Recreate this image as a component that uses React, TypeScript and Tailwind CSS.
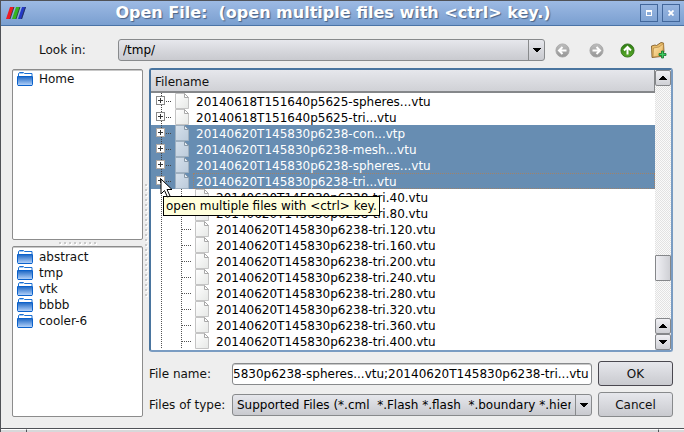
import React from "react";

const places = ["abstract", "tmp", "vtk", "bbbb", "cooler-6"];

type Entry = { name: string; selected?: boolean; child?: boolean; focused?: boolean };

const entries: Entry[] = [
  { name: "20140618T151640p5625-spheres...vtu" },
  { name: "20140618T151640p5625-tri...vtu" },
  { name: "20140620T145830p6238-con...vtp", selected: true },
  { name: "20140620T145830p6238-mesh...vtu", selected: true },
  { name: "20140620T145830p6238-spheres...vtu", selected: true },
  { name: "20140620T145830p6238-tri...vtu", selected: true, focused: true },
  ...[40, 80, 120, 160, 200, 240, 280, 320, 360, 400].map((n) => ({
    name: `20140620T145830p6238-tri.${n}.vtu`,
    child: true,
  })),
];

function Defs() {
  return (
    <svg width="0" height="0" className="absolute" aria-hidden="true">
      <defs>
        <linearGradient id="folder" x1="0" y1="0" x2="0" y2="1">
          <stop offset="0" stopColor="#1b66c4" />
          <stop offset="1" stopColor="#b9d6fb" />
        </linearGradient>
        <linearGradient id="paper" x1="0" y1="0" x2="1" y2="1">
          <stop offset="0" stopColor="#ffffff" />
          <stop offset="1" stopColor="#e6e8e6" />
        </linearGradient>
        <linearGradient id="paperSelected" x1="0" y1="0" x2="1" y2="1">
          <stop offset="0" stopColor="#d5e0eb" />
          <stop offset="1" stopColor="#bccbdb" />
        </linearGradient>
        <linearGradient id="gray" x1="0" y1="0" x2="0" y2="1">
          <stop offset="0" stopColor="#bdbdbd" />
          <stop offset="1" stopColor="#969696" />
        </linearGradient>
        <linearGradient id="green" x1="0" y1="0" x2="0" y2="1">
          <stop offset="0" stopColor="#2f7d12" />
          <stop offset="1" stopColor="#57a829" />
        </linearGradient>
        <linearGradient id="gold" x1="0" y1="0" x2="1" y2="1">
          <stop offset="0" stopColor="#fde7b0" />
          <stop offset="1" stopColor="#e8b258" />
        </linearGradient>
      </defs>
    </svg>
  );
}

function FolderIcon() {
  return (
    <svg width="16" height="14" viewBox="0 0 16 14" className="shrink-0" aria-hidden="true">
      <path d="M1.5 4V1.5L2.5.5h4l1 1h7.5V4" fill="#fff" stroke="#1a6fd2" />
      <path d="M2 1.5h4.500" stroke="#9cc7f5" />
      <path d="M.5 4.500h15v8l-.5 1H1l-.5-1z" fill="url(#folder)" stroke="#0b62cc" />
      <path d="M2 3.500h12" stroke="#fff" />
    </svg>
  );
}

function FileIcon({ selected }: { selected?: boolean }) {
  return (
    <svg width="14" height="16" viewBox="0 0 14 16" className="shrink-0" aria-hidden="true">
      <path
        d="M.5.5H9.500L13.500 4.500V15.500H.5z"
        fill={selected ? "url(#paperSelected)" : "url(#paper)"}
        stroke={selected ? "#9fb0c0" : "#c4c4c4"}
      />
      <path d="M9.500.5V4.500H13.500z" fill={selected ? "#e3eaf2" : "#fff"} stroke={selected ? "#8798a8" : "#a8a8a8"} />
    </svg>
  );
}

function Guides({ entry }: { entry: Entry }) {
  if (entry.child) {
    return (
      <svg width="44" height="16" viewBox="0 0 44 16" className="shrink-0" aria-hidden="true">
        <path d="M10.500 0V16M30.500 0V16M31 8.500H40" stroke="#555" strokeDasharray="1 1" fill="none" />
      </svg>
    );
  }
  return (
    <svg width="24" height="16" viewBox="0 0 24 16" className="shrink-0" aria-hidden="true">
      <path d="M10.500 0V3M10.500 12V16M15 8.500H20" stroke="#444" strokeDasharray="1 1" fill="none" />
      <rect x="5.500" y="3.500" width="8" height="8" fill="#fff" stroke={entry.selected ? "#b0a9a3" : "#888"} />
      <path d="M7 7.500H12M9.500 5V10" stroke="#333" />
    </svg>
  );
}

function Arrow({ up }: { up?: boolean }) {
  return (
    <svg width="8" height="4" viewBox="0 0 8 4" shapeRendering="crispEdges" aria-hidden="true">
      <path d={up ? "M0 4L3 0H5L8 4z" : "M0 0H8L5 4H3z"} fill="#000" />
    </svg>
  );
}

function Combo({ id, text, className }: { id: string; text: string; className?: string }) {
  return (
    <div className={`grid h-[22px] min-w-0 flex-1 grid-cols-[minmax(0,1fr)_17px] ${className ?? ""}`}>
      <select
        id={id}
        className="col-span-2 col-start-1 row-start-1 h-full w-full appearance-none overflow-hidden rounded-[3px] border border-[#888a8c] bg-linear-to-b from-[#e6e7ec] to-[#c9cacf] pr-5 pl-1 text-black outline-none"
      >
        <option>{text}</option>
      </select>
      <span className="pointer-events-none col-start-2 row-start-1 my-px flex items-center justify-center border-l border-[#888a8c]">
        <Arrow />
      </span>
    </div>
  );
}

function RoundArrow({ turn, color }: { turn: number; color: string }) {
  return (
    <svg width="15" height="15" viewBox="0 0 15 15" aria-hidden="true">
      <circle cx="7.500" cy="7.500" r="6.600" fill={`url(#${color})`} stroke={color === "green" ? "#2b6b16" : "#a5a5a5"} strokeWidth=".8" />
      <path
        d="M7.500 11.500V4.500M4 7.500L7.500 4L11 7.500"
        transform={`rotate(${turn} 7.5 7.5)`}
        fill="none"
        stroke="#fff"
        strokeWidth="2"
      />
    </svg>
  );
}

function NewFolderIcon() {
  return (
    <svg width="18" height="18" viewBox="0 0 18 18" aria-hidden="true">
      <path d="M1.500 5L5 4L6.500 4.500L11 1.500L13.500 2L14 11L11 15.500L2 16.500z" fill="#e9bd6b" stroke="#76501d" strokeWidth=".8" />
      <path d="M3.500 7L9 6L13.500 2.500L13 11L10.500 15L3 16z" fill="url(#gold)" stroke="#a87a35" strokeWidth=".6" />
      <path d="M11.500 10h2v2.500H16v2h-2.500V17h-2v-2.500H9v-2h2.500z" fill="#3fce61" stroke="#11702d" strokeWidth=".8" />
    </svg>
  );
}

const scrollButton =
  "flex h-4 w-full shrink-0 items-center justify-center rounded-[2px] border border-[#85878a] bg-linear-to-b from-[#f0f0f4] to-[#cfd0d5]";

const pushButton =
  "h-[25px] w-[75px] shrink-0 rounded-[3px] border bg-linear-to-b from-[#e6e7ec] to-[#c9cacf] text-center";

export default function App() {
  return (
    <div className="relative flex min-h-screen flex-col overflow-hidden border-t border-l border-[#505257] bg-[#eeeeee] font-['DejaVu_Sans',sans-serif] text-[12px] leading-4 text-[#111]">
      <Defs />
      <header className="flex h-[25px] items-center border-b border-[#4a73a6] bg-linear-to-b from-[#9dbae4] to-[#7a9fd0] pr-1 pl-[5px]">
        <svg width="20" height="13" viewBox="0 0 20 13" className="shrink-0" aria-hidden="true">
          <path d="M4 0h4L4 12H0z" fill="#ed1c24" />
          <path d="M10 0h4l-4 12H6z" fill="#35b51e" />
          <path d="M16 0h4l-4 12h-4z" fill="#2439c7" />
          <path d="M8 0L4 12M14 0l-4 12M19.500 0l-4 12" stroke="#26323f" strokeWidth=".8" />
        </svg>
        <h1 className="flex-1 text-center text-[16px] leading-6 font-bold whitespace-pre text-white [text-shadow:1px_1px_1px_#4a6285]">
          {"Open File:  (open multiple files with <ctrl> key.)"}
        </h1>
        <div className="flex gap-1">
          <button type="button" aria-label="Maximize" className="flex size-[18px] items-center justify-center border border-[#42679b]">
            <span className="size-[6px] border border-t-2 border-white" />
          </button>
          <button type="button" aria-label="Close" className="flex size-[18px] items-center justify-center border border-[#42679b]">
            <svg width="6" height="6" viewBox="0 0 6 6" aria-hidden="true">
              <path d="M.5.5l5 5M5.500.5l-5 5" stroke="#fff" strokeWidth="1.800" />
            </svg>
          </button>
        </div>
      </header>

      <div className="mt-[13px] flex items-center pl-[38px]">
        <label htmlFor="look-in" className="w-[79px] shrink-0">
          Look in:
        </label>
        <Combo id="look-in" text="/tmp/" />
        <div className="flex h-[22px] items-center pr-[7px]">
          <button type="button" aria-label="Back" className="flex w-[34px] justify-center">
            <RoundArrow turn={-90} color="gray" />
          </button>
          <button type="button" aria-label="Forward" className="flex w-[34px] justify-center">
            <RoundArrow turn={90} color="gray" />
          </button>
          <button type="button" aria-label="Parent directory" className="flex w-7 justify-center">
            <RoundArrow turn={0} color="green" />
          </button>
          <button type="button" aria-label="New folder" className="flex w-9 justify-center">
            <NewFolderIcon />
          </button>
        </div>
      </div>

      <div className="mt-[7px] flex flex-1 pr-[11px] pl-[11px]">
        <div className="flex w-[131px] shrink-0 flex-col pt-px">
          <ul className="flex-1 rounded-[2px] border border-[#8c8c8c] bg-white px-1 pt-px shadow-[inset_0_1px_0_#c8c8c8]">
            <li className="flex h-4 items-center gap-[6px]">
              <FolderIcon />
              Home
            </li>
          </ul>
          <div className="flex h-[6px] items-center justify-center gap-[3px]">
            {Array.from({ length: 8 }, (_, i) => (
              <span key={i} className="size-[2px] bg-[#c8c8c8] shadow-[1px_1px_0_#fff]" />
            ))}
          </div>
          <ul className="flex-1 rounded-[2px] border border-[#8c8c8c] bg-white px-1 pt-[2px] shadow-[inset_0_1px_0_#c8c8c8]">
            {places.map((p) => (
              <li key={p} className="flex h-4 items-center gap-[6px]">
                <FolderIcon />
                {p}
              </li>
            ))}
          </ul>
        </div>

        <div className="flex w-[6px] shrink-0 flex-col items-center gap-[3px] pt-[116px]">
          {Array.from({ length: 23 }, (_, i) => (
            <span key={i} className="size-[2px] shrink-0 bg-[#c8c8c8] shadow-[1px_1px_0_#fff]" />
          ))}
        </div>

        <div className="flex min-w-0 flex-1 flex-col">
          <div className="flex flex-1 overflow-hidden rounded-[3px] border-2 border-t-[#4a759f] border-r-[#7a9cc2] border-b-[#7a9cc2] border-l-[#4a759f] bg-white">
            <div className="min-w-0 flex-1">
              <div className="h-[23px] border-r border-b-2 border-[#85878a] bg-linear-to-b from-[#e6e7ec] to-[#d0d1d6] pt-1 pl-1">
                Filename
              </div>
              <ul role="tree" aria-label="Files" aria-multiselectable="true">
                {entries.map((e) => (
                  <li
                    key={e.name}
                    role="treeitem"
                    aria-selected={!!e.selected}
                    className={`flex h-4 items-center leading-[18px] ${e.selected ? "bg-[#678db2] text-white" : "text-black"}`}
                  >
                    <Guides entry={e} />
                    <FileIcon selected={e.selected} />
                    <span
                      className={`ml-1 h-4 flex-1 pl-[3px] ${
                        e.focused ? "outline-1 -outline-offset-1 outline-[#a0826a] outline-dotted" : ""
                      }`}
                    >
                      {e.name}
                    </span>
                  </li>
                ))}
              </ul>
            </div>
            <div className="flex w-4 shrink-0 flex-col bg-[repeating-conic-gradient(#e2e2e2_0_25%,#fafafa_0_50%)] bg-size-[2px_2px]">
              <button type="button" aria-label="Scroll up" className={scrollButton}>
                <Arrow up />
              </button>
              <span className="grow-169" />
              <span className="h-[26px] shrink-0 rounded-[1px] border border-[#85878a] bg-linear-to-r from-[#f0f0f4] to-[#cfd0d5]" />
              <span className="grow-37" />
              <button type="button" aria-label="Scroll up" className={scrollButton}>
                <Arrow up />
              </button>
              <button type="button" aria-label="Scroll down" className={scrollButton}>
                <Arrow />
              </button>
            </div>
          </div>

          <div className="mt-[9px] flex items-center">
            <label htmlFor="file-name" className="w-[83px] shrink-0">
              File name:
            </label>
            <input
              id="file-name"
              type="text"
              defaultValue="5830p6238-spheres...vtu;20140620T145830p6238-tri...vtu"
              className="mr-[6px] h-[22px] min-w-0 flex-1 rounded-[3px] border border-[#888a8c] bg-white text-black shadow-[inset_0_1px_0_#c8c8c8] outline-none"
            />
            <button type="button" className={`${pushButton} border-[#4a4850]`}>
              OK
            </button>
          </div>
          <div className="mt-[6px] flex items-center">
            <label htmlFor="file-type" className="w-[83px] shrink-0">
              Files of type:
            </label>
            <Combo
              id="file-type"
              className="mr-[6px]"
              text={"Supported Files (*.cml \u00a0*.Flash *.flash \u00a0*.boundary *.hierarchy)"}
            />
            <button type="button" className={`${pushButton} border-[#888a8c]`}>
              Cancel
            </button>
          </div>
        </div>
      </div>

      <footer className="mt-[11px] flex h-1 border-t border-[#505257] bg-[#d8d8da]">
        <span className="w-[26px] border-t border-r border-t-white border-r-[#505257]" />
        <span className="flex-1 border-t border-white" />
        <span className="w-[26px] border-t border-l border-t-white border-l-[#505257]" />
      </footer>

      <div
        role="tooltip"
        className="absolute top-[195px] left-[162px] border border-black bg-[#ffffdc] px-[2px] py-px whitespace-nowrap text-black"
      >
        {"open multiple files with <ctrl> key."}
      </div>
      <svg width="13" height="20" viewBox="0 0 13 20" className="absolute top-[177px] left-[159px]" aria-hidden="true">
        <path d="M1 1V16L4.500 12.500L7.500 19L10 18L7 11.500H12z" fill="#fff" stroke="#000" />
      </svg>
    </div>
  );
}
